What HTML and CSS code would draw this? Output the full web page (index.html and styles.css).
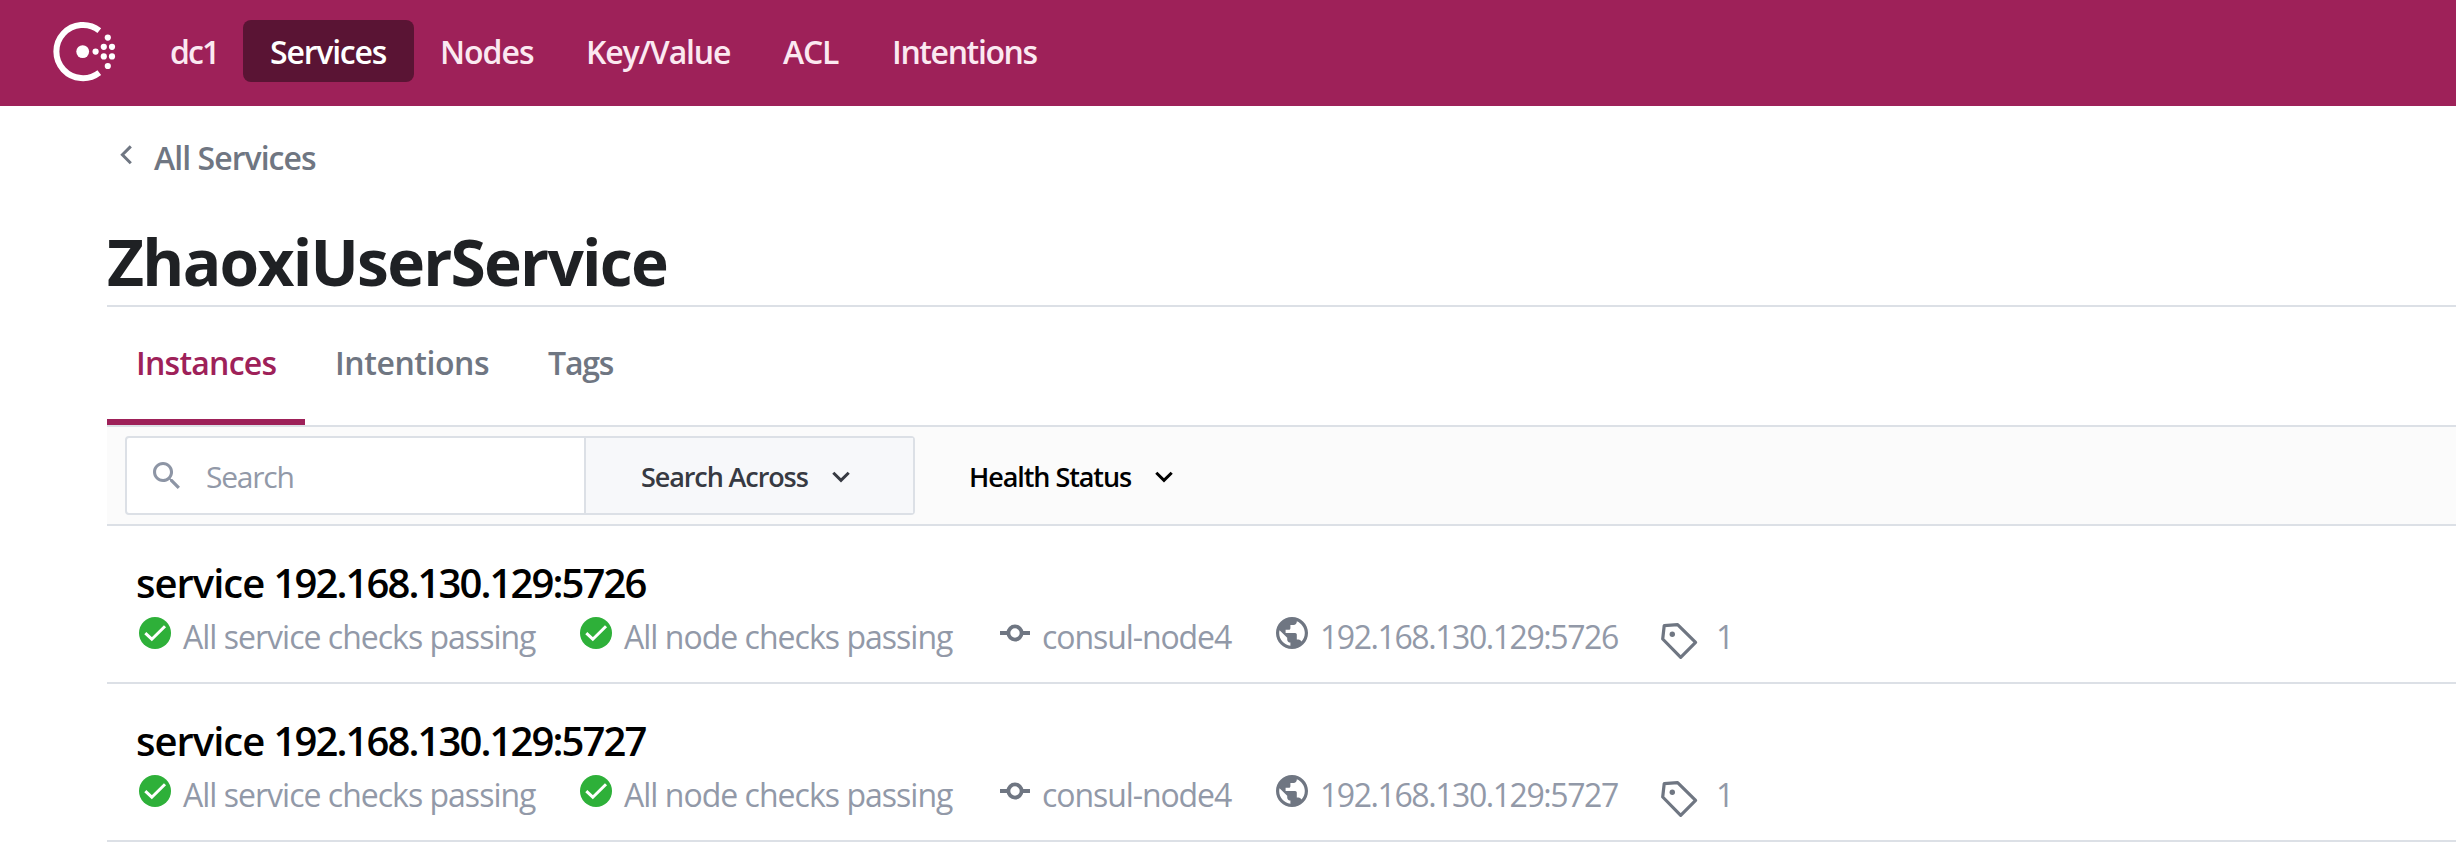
FILE: index.html
```html
<!DOCTYPE html>
<html lang="en">
<head>
<meta charset="utf-8">
<title>ZhaoxiUserService - Consul</title>
<link rel="stylesheet" href="styles.css">
</head>
<body>
<svg class="sprite" aria-hidden="true">
  <symbol id="check" viewBox="0 0 32 32"><circle cx="16" cy="16" r="16" fill="#2eb039"/><path d="M6.3 16.2l6.5 6L26 9.3" fill="none" stroke="#fff" stroke-width="3"/></symbol>
  <symbol id="node" viewBox="0 0 30 32"><path d="M0 16h9M21 16h9" stroke="#6f7682" stroke-width="4"/><circle cx="15" cy="16" r="6.6" fill="none" stroke="#6f7682" stroke-width="3.8"/></symbol>
  <symbol id="globe" viewBox="2 2 20 20"><path fill="#6f7682" d="M12 2C6.48 2 2 6.48 2 12s4.48 10 10 10 10-4.48 10-10S17.52 2 12 2zm-1 17.93c-3.95-.49-7-3.85-7-7.93 0-.62.08-1.21.21-1.79L9 15v1c0 1.1.9 2 2 2v1.93zm6.9-2.54c-.26-.81-1-1.39-1.9-1.39h-1v-3c0-.55-.45-1-1-1H8v-2h2c.55 0 1-.45 1-1V7h2c1.1 0 2-.9 2-2v-.41c2.93 1.19 5 4.06 5 7.41 0 2.08-.8 3.97-2.1 5.39z"/></symbol>
  <symbol id="tag" viewBox="0 0 38 38"><path d="M4.2 3.7L17.6 2.6 35.6 20.4 20.7 35.3 2.7 17z" fill="none" stroke="#6f7682" stroke-width="3.2" stroke-linejoin="round"/><circle cx="12.3" cy="12.3" r="2.7" fill="#6f7682"/></symbol>
  <symbol id="down" viewBox="0 0 18 12"><path d="M1.3 1.7L9 9.4l7.7-7.7" fill="none" stroke="currentColor" stroke-width="3"/></symbol>
</svg>
<header class="topbar">
  <svg class="logo" width="64" height="62" viewBox="0 0 64 62">
    <path d="M47.3 9.6A26.6 26.6 0 1 0 47.3 51.6" fill="none" stroke="#fff" stroke-width="6"/>
    <g fill="#fff"><circle cx="30.7" cy="30.6" r="6.4"/><circle cx="43.6" cy="30.6" r="3.1"/><circle cx="51.8" cy="25.8" r="3.1"/><circle cx="60" cy="25.8" r="3.1"/><circle cx="51.8" cy="35.4" r="3.1"/><circle cx="60" cy="35.4" r="3.1"/><circle cx="55.8" cy="16.6" r="3.1"/><circle cx="55.8" cy="45" r="3.1"/></g>
  </svg>
  <nav class="nav">
    <a class="nav-dc">dc1</a>
    <a class="nav-services">Services</a>
    <a class="nav-nodes">Nodes</a>
    <a class="nav-kv">Key/Value</a>
    <a class="nav-acl">ACL</a>
    <a class="nav-intentions">Intentions</a>
  </nav>
</header>
<main class="main">
  <a class="breadcrumb"><svg width="14" height="20" viewBox="0 0 14 20"><path d="M11.8 1.4L3.4 9.8l8.4 8.4" fill="none" stroke="currentColor" stroke-width="3"/></svg><span>All Services</span></a>
  <h1 class="title">ZhaoxiUserService</h1>
  <nav class="tabs">
    <a class="tab tab-active">Instances</a>
    <a class="tab tab-intentions">Intentions</a>
    <a class="tab tab-tags">Tags</a>
  </nav>
  <div class="filters">
    <div class="searchbox">
      <div class="search-input"><svg width="27" height="27" viewBox="3 3 17.5 17.5"><path fill="currentColor" d="M15.5 14h-.79l-.28-.27C15.41 12.59 16 11.11 16 9.5 16 5.91 13.09 3 9.5 3S3 5.91 3 9.5 5.91 16 9.5 16c1.61 0 3.09-.59 4.23-1.57l.27.28v.79l5 4.99L20.49 19l-4.99-5zm-6 0C7.01 14 5 11.99 5 9.5S7.01 5 9.5 5 14 7.01 14 9.5 11.99 14 9.5 14z"/></svg><span>Search</span></div>
      <div class="across"><span>Search Across</span><svg width="18" height="12"><use href="#down"/></svg></div>
    </div>
    <div class="health"><span>Health Status</span><svg width="18" height="12"><use href="#down"/></svg></div>
  </div>
  <section class="row">
    <h2 class="row-title">service <span class="address">192.168.130.129:5726</span></h2>
    <div class="meta">
      <span class="item item-service"><svg width="32" height="32"><use href="#check"/></svg>All service checks passing</span>
      <span class="item item-nodes"><svg width="32" height="32"><use href="#check"/></svg>All node checks passing</span>
      <span class="item item-node"><svg width="30" height="32"><use href="#node"/></svg>consul-node4</span>
      <span class="item item-ip"><svg width="32" height="32"><use href="#globe"/></svg>192.168.130.129:5726</span>
      <span class="item item-tag"><svg width="38" height="38"><use href="#tag"/></svg>1</span>
    </div>
  </section>
  <section class="row">
    <h2 class="row-title">service <span class="address">192.168.130.129:5727</span></h2>
    <div class="meta">
      <span class="item item-service"><svg width="32" height="32"><use href="#check"/></svg>All service checks passing</span>
      <span class="item item-nodes"><svg width="32" height="32"><use href="#check"/></svg>All node checks passing</span>
      <span class="item item-node"><svg width="30" height="32"><use href="#node"/></svg>consul-node4</span>
      <span class="item item-ip"><svg width="32" height="32"><use href="#globe"/></svg>192.168.130.129:5727</span>
      <span class="item item-tag"><svg width="38" height="38"><use href="#tag"/></svg>1</span>
    </div>
  </section>
</main>
</body>
</html>
```

FILE: styles.css
```css
* { box-sizing: border-box; }
body {
  margin: 0;
  background: #fff;
  font-family: "Open Sans", "Noto Sans", sans-serif;
  font-size: 32px;
  white-space: nowrap;
}
svg { display: block; flex: none; }
.sprite { display: none; }

.topbar {
  display: flex;
  align-items: flex-start;
  height: 106px;
  padding: 20px 0 0 52px;
  background: #9e2159;
}
.logo { margin: 1px 53px 0 0; }
.nav { display: flex; color: #fbe9f1; font-weight: 600; line-height: 64px; }
.nav a { flex: none; }
.nav-dc { width: 74px; padding-left: 1px; letter-spacing: -1.9px; }
.nav-services {
  width: 171px;
  height: 62px;
  padding-left: 27px;
  border-radius: 8px;
  background: #5a1434;
  color: #fff;
  letter-spacing: -1.2px;
}
.nav-nodes { width: 146px; margin-left: 26px; letter-spacing: -1px; }
.nav-kv { width: 197px; letter-spacing: -1.15px; }
.nav-acl { width: 109px; letter-spacing: -1.2px; }
.nav-intentions { letter-spacing: -1.38px; }

.main { padding: 32px 0 0 107px; }
.breadcrumb {
  display: flex;
  height: 40px;
  line-height: 40px;
  color: #6f7682;
  font-weight: 600;
  letter-spacing: -0.95px;
}
.breadcrumb svg { margin: 7px 21px 0 12px; }
.title {
  margin: 44px 0 0;
  height: 85px;
  border-bottom: 2px solid #dce0e6;
  color: #1f2124;
  font-size: 64px;
  font-weight: 700;
  line-height: 80px;
  letter-spacing: -1.75px;
}
.tabs {
  display: flex;
  height: 120px;
  border-bottom: 2px solid #dce0e6;
  color: #6f7682;
  font-weight: 600;
  line-height: 40px;
}
.tab { padding-top: 36px; }
.tab-active {
  width: 198px;
  padding-left: 29px;
  border-bottom: 6px solid #9e2159;
  color: #9e2159;
  letter-spacing: -0.76px;
}
.tab-intentions { width: 243px; padding-left: 30px; letter-spacing: -0.44px; }
.tab-tags { letter-spacing: -1.2px; }

.filters {
  display: flex;
  height: 99px;
  padding: 9px 0 9px 18px;
  border-bottom: 2px solid #dce0e6;
  background: #fbfbfb;
  font-size: 27px;
  font-weight: 600;
  line-height: 77px;
}
.searchbox {
  display: flex;
  width: 790px;
  height: 79px;
  border: 2px solid #dce0e6;
  border-radius: 4px;
  background: #fff;
}
.search-input {
  display: flex;
  width: 459px;
  padding-left: 26px;
  border-right: 2px solid #dce0e6;
  color: #9299a8;
  font-size: 30px;
  font-weight: 400;
  letter-spacing: -1.22px;
}
.search-input svg { margin: 24px 26px 0 0; color: #8d95a5; }
.across {
  display: flex;
  flex: 1;
  padding-left: 55px;
  background: #f7f8fa;
  color: #373a42;
  letter-spacing: -1.1px;
}
.across span { width: 191px; }
.across svg { margin-top: 33px; }
.health { display: flex; padding: 2px 0 0 54px; color: #000; letter-spacing: -1.07px; }
.health span { width: 186px; }
.health svg { margin-top: 33px; }

.row { height: 158px; padding: 32px 0 0 31px; border-bottom: 2px solid #dce0e6; }
.row-title {
  margin: 0 0 9px -2px;
  color: #000;
  font-size: 40px;
  font-weight: 600;
  line-height: 50px;
  letter-spacing: -1px;
}
.address { letter-spacing: -1.9px; }
.meta { display: flex; padding-left: 1px; color: #9299a8; line-height: 40px; }
.item { display: flex; flex: none; }
.item svg { margin: 0 12px 0 0; }
.item-service { width: 441px; letter-spacing: -0.99px; }
.item-nodes { width: 420px; letter-spacing: -0.98px; }
.item-node { width: 276px; letter-spacing: -1.08px; }
.item-ip { width: 384px; letter-spacing: -1.43px; }
.item-tag svg { margin: 5px 18px 0 0; }
```
